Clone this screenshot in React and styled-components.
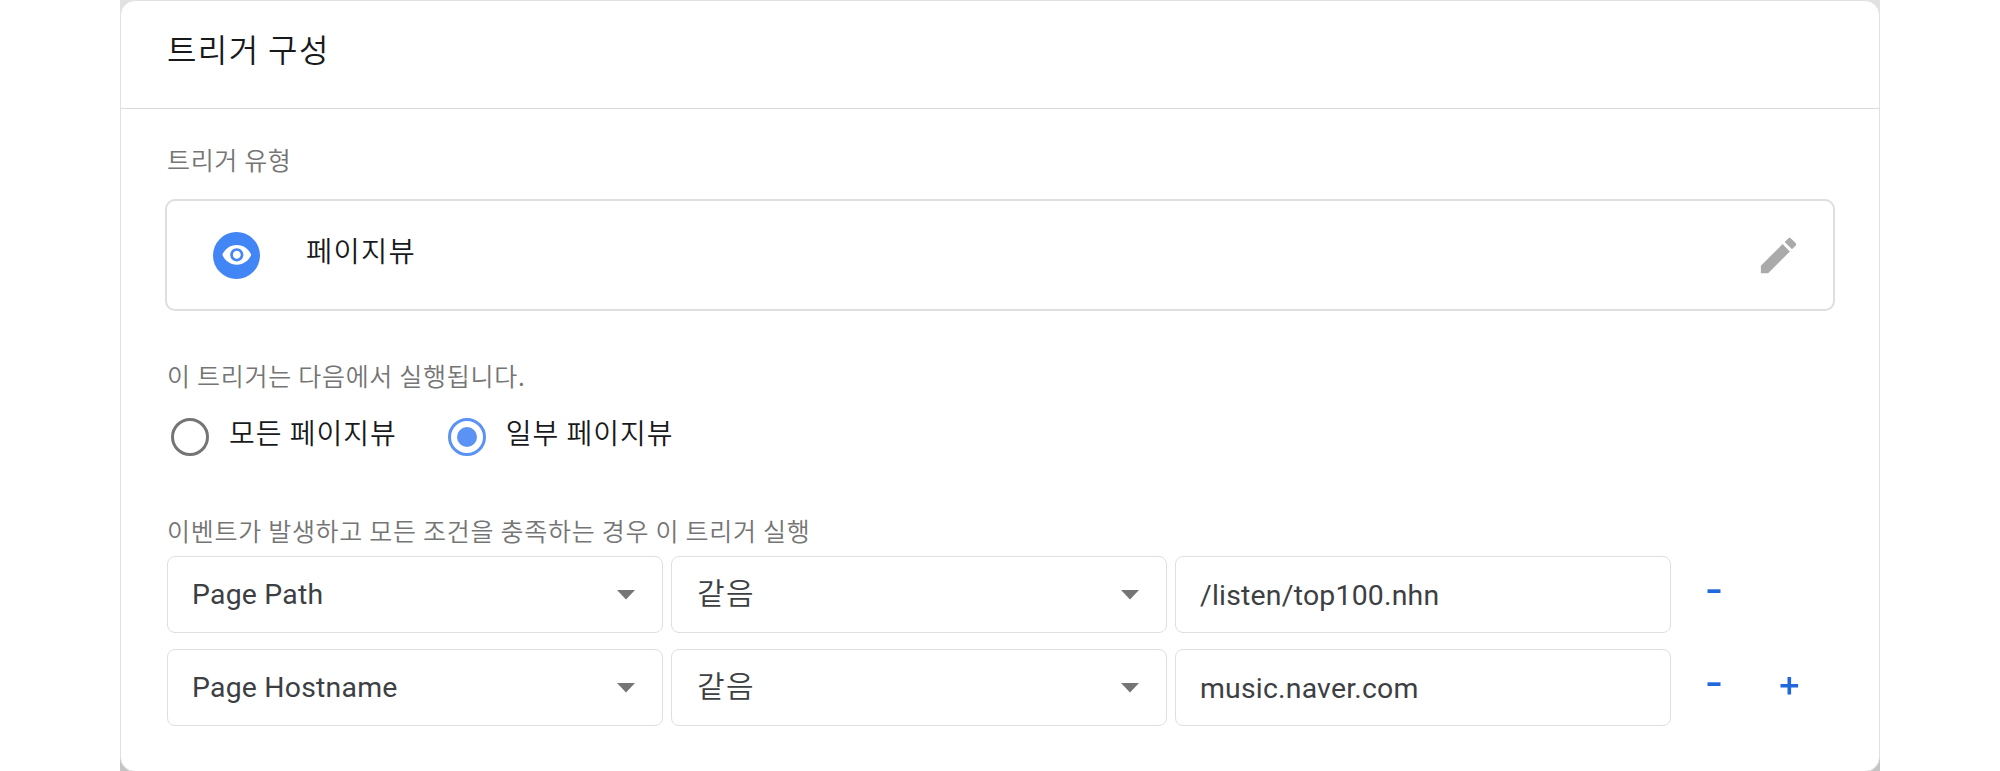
import React from "react";
import styled, { createGlobalStyle } from "styled-components";

const GlobalStyle = createGlobalStyle`
  *, *::before, *::after { box-sizing: border-box; }
  body { margin: 0; background: #fff; }
`;

const korean = `"Noto Sans CJK KR", "Noto Sans", sans-serif`;
const latin = `Roboto, "Noto Sans CJK KR", sans-serif`;

const Backdrop = styled.main`
  width: 1760px;
  height: 771px;
  margin: 0 auto;
  overflow: hidden;
  background: linear-gradient(#e2e2e2 0, #e2e2e2 50%, #c4c4c4 100%);
`;

const Card = styled.section`
  height: 772px;
  border: 1px solid #e0e0e0;
  border-radius: 15px;
  background: #fff;
`;

const Header = styled.header`
  height: 108px;
  padding: 27px 0 0 46px;
  border-bottom: 1px solid #dadada;
`;

const Title = styled.h1`
  margin: 0;
  font: 350 32px/40px ${korean};
  letter-spacing: 1.4px;
  color: #18191b;
`;

const Body = styled.div`
  display: flex;
  flex-direction: column;
  padding: 35px 44px 0;
`;

const Label = styled.div`
  padding-left: 2px;
  font: 350 25px/30px ${korean};
  letter-spacing: ${(p) => p.$tracking || 0.72}px;
  color: #757575;
`;

const TypeBox = styled.div`
  display: flex;
  align-items: center;
  height: 112px;
  margin: 25px 0 49px;
  padding: 0 31px 0 46px;
  border: 2px solid #dedede;
  border-radius: 10px;
`;

const TypeBadge = styled.span`
  display: grid;
  place-items: center;
  width: 47px;
  height: 47px;
  border-radius: 50%;
  background: #4285f4;
`;

const TypeName = styled.span`
  flex: 1;
  padding: 0 0 10px 46px;
  font: 350 28.5px/36px ${korean};
  letter-spacing: 1.3px;
  color: #18191b;
`;

const RadioGroup = styled.div`
  display: flex;
  gap: 51px;
  margin: 28px 0 59px;
  padding-left: 6px;
`;

const RadioOption = styled.label`
  display: flex;
  align-items: center;
  height: 38px;
  font: 350 28px/36px ${korean};
  letter-spacing: 1px;
  color: #18191b;
`;

const RadioMark = styled.span`
  display: grid;
  place-items: center;
  width: 38px;
  height: 38px;
  margin-right: 20px;
  border: 3px solid ${(p) => (p.$checked ? "#5b93f5" : "#757575")};
  border-radius: 50%;

  &::after {
    content: "";
    width: 20px;
    height: 20px;
    border-radius: 50%;
    background: ${(p) => (p.$checked ? "#5b93f5" : "transparent")};
  }
`;

const RadioText = styled.span`
  padding-bottom: 10px;
`;

const Conditions = styled.div`
  display: flex;
  flex-direction: column;
  gap: 16px;
  padding: 11px 0 0 2px;
`;

const ConditionRow = styled.div`
  display: grid;
  grid-template-columns: repeat(3, 496px) auto;
  column-gap: 8px;
  height: 77px;
`;

const Field = styled.div`
  display: flex;
  align-items: center;
  justify-content: space-between;
  padding: 0 27px 0 24px;
  border: 1px solid #dedfe1;
  border-radius: 8px;
  color: #3c4043;
`;

const LatinText = styled.span`
  padding-top: ${(p) => p.$drop || 0}px;
  font: 400 28.4px/36px ${latin};
  letter-spacing: 0.22px;
`;

const KoreanText = styled.span`
  padding: 0 0 8px 1px;
  font: 350 30px/36px ${korean};
  letter-spacing: 1.4px;
`;

const Actions = styled.div`
  display: flex;
  gap: 53px;
  padding: 26px 0 0 24px;
`;

const ActionButton = styled.button`
  width: 22px;
  height: 22px;
  padding: 0;
  border: 0;
  background: none;
  color: #2069dc;

  svg { display: block; }
`;

const EyeIcon = () => (
  <svg width="31.6" height="31.6" viewBox="0 0 24 24" fill="#fff">
    <path d="M12 4.5C7 4.5 2.73 7.61 1 12c1.73 4.39 6 7.5 11 7.5s9.27-3.11 11-7.5c-1.73-4.39-6-7.5-11-7.5zM12 17c-2.76 0-5-2.24-5-5s2.24-5 5-5 5 2.24 5 5-2.24 5-5 5zm0-8c-1.66 0-3 1.34-3 3s1.34 3 3 3 3-1.34 3-3-1.34-3-3-3z" />
  </svg>
);

const PencilIcon = () => (
  <svg width="47" height="47" viewBox="0 0 24 24" fill="#aaa">
    <path d="M3 17.25V21h3.75L17.81 9.94l-3.75-3.75L3 17.25zM20.71 7.04c.39-.39.39-1.02 0-1.41l-2.34-2.34c-.39-.39-1.02-.39-1.41 0l-1.83 1.83 3.75 3.75 1.83-1.83z" />
  </svg>
);

const CaretIcon = () => (
  <svg width="18" height="10" viewBox="0 0 18 10" fill="#757575">
    <path d="M0 0h18L9 9.5z" />
  </svg>
);

const MinusIcon = () => (
  <svg width="22" height="22" viewBox="0 0 22 22" fill="currentColor">
    <path d="M4.5 7.3h13v3.700h-13z" />
  </svg>
);

const PlusIcon = () => (
  <svg width="22" height="22" viewBox="0 0 22 22" fill="currentColor">
    <path d="M9.500 2h3.600v7h7v3.500h-7v7H9.500v-7h-7V9h7z" />
  </svg>
);

const conditions = [
  { variable: "Page Path", operator: "같음", value: "/listen/top100.nhn" },
  { variable: "Page Hostname", operator: "같음", value: "music.naver.com" },
];

export default function App() {
  return (
    <>
      <GlobalStyle />
      <Backdrop>
        <Card>
          <Header>
            <Title>트리거 구성</Title>
          </Header>
          <Body>
            <Label $tracking={0.65}>트리거 유형</Label>
            <TypeBox>
              <TypeBadge>
                <EyeIcon />
              </TypeBadge>
              <TypeName>페이지뷰</TypeName>
              <PencilIcon />
            </TypeBox>

            <Label>이 트리거는 다음에서 실행됩니다.</Label>
            <RadioGroup>
              <RadioOption>
                <RadioMark />
                <RadioText>모든 페이지뷰</RadioText>
              </RadioOption>
              <RadioOption>
                <RadioMark $checked />
                <RadioText>일부 페이지뷰</RadioText>
              </RadioOption>
            </RadioGroup>

            <Label>이벤트가 발생하고 모든 조건을 충족하는 경우 이 트리거 실행</Label>
            <Conditions>
              {conditions.map((c, i) => (
                <ConditionRow key={c.variable}>
                  <Field>
                    <LatinText>{c.variable}</LatinText>
                    <CaretIcon />
                  </Field>
                  <Field>
                    <KoreanText>{c.operator}</KoreanText>
                    <CaretIcon />
                  </Field>
                  <Field>
                    <LatinText $drop={2}>{c.value}</LatinText>
                  </Field>
                  <Actions>
                    <ActionButton aria-label="Remove condition">
                      <MinusIcon />
                    </ActionButton>
                    {i === conditions.length - 1 && (
                      <ActionButton aria-label="Add condition">
                        <PlusIcon />
                      </ActionButton>
                    )}
                  </Actions>
                </ConditionRow>
              ))}
            </Conditions>
          </Body>
        </Card>
      </Backdrop>
    </>
  );
}
